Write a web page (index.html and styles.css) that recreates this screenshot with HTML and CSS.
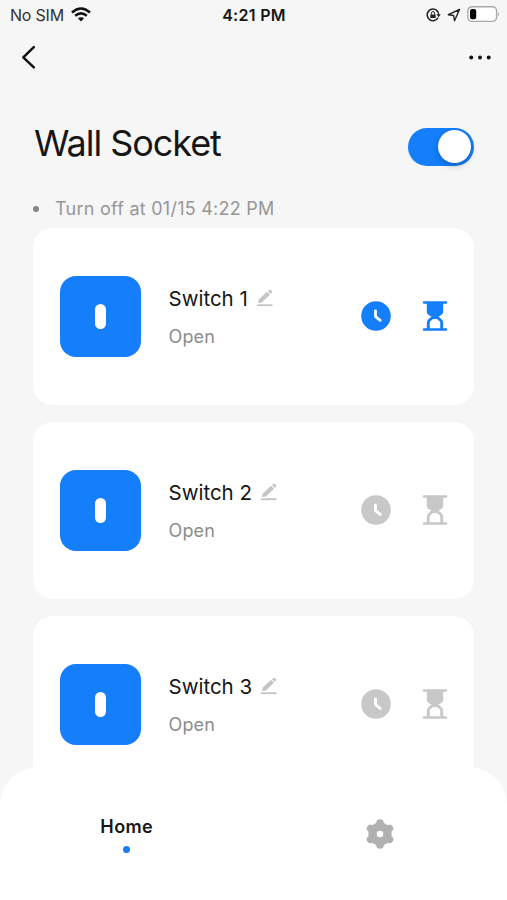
FILE: index.html
```html
<!DOCTYPE html>
<html lang="en">
<head>
<meta charset="utf-8">
<title>Wall Socket</title>
<link rel="stylesheet" href="styles.css">
</head>
<body>
<svg class="defs" width="0" height="0" aria-hidden="true">
  <symbol id="pencil" viewBox="0 0 18 18">
    <path d="M1 16.200h15.500" stroke="currentColor" stroke-width="1.800" fill="none"/>
    <path d="M2 14l.8-3.600 8.300-7.600 2.900 2.900-8.300 7.700z" fill="currentColor"/>
    <path d="M12 2.200l1.400-1.300q.8-.6 1.500.1l1.200 1.200q.6.700-.1 1.400L14.800 4.900z" fill="currentColor"/>
  </symbol>
  <symbol id="clock" viewBox="0 0 30 30">
    <circle cx="15" cy="15" r="14.800" fill="currentColor"/>
    <path d="M14.500 9.800v5.800l4.700 3.700" stroke="#fff" stroke-width="2.800" stroke-linecap="round" stroke-linejoin="round" fill="none"/>
  </symbol>
  <symbol id="hourglass" viewBox="0 0 26 30">
    <path d="M2 1.500h22M2 28.400h22" stroke="currentColor" stroke-width="2.500" stroke-linecap="round"/>
    <path d="M4.800 2h16.400v9q0 1.600-1.400 2.600L17.200 15.600H8.800L6.200 13.600Q4.800 12.600 4.800 11z" fill="currentColor"/>
    <path d="M6.300 28v-6.200q0-1.800 1.500-2.900l2.900-2.400h4.600l2.900 2.400q1.500 1.100 1.500 2.900V28" stroke="currentColor" stroke-width="2.900" fill="none"/>
  </symbol>
</svg>
<div class="screen">
  <header class="status">
    <div class="carrier"><span>No SIM</span>
      <svg width="20" height="15" viewBox="0 0 20 15" fill="none" stroke="#111" stroke-width="2.600"><path d="M1 5.400Q10-2.400 19 5.400M4.200 8.800q5.800-4.700 11.600 0"/><path d="M6.900 11.300q3.100-2.200 6.200 0L10 14.500z" fill="#111" stroke="none"/></svg>
    </div>
    <div class="time">4:21 PM</div>
    <div class="indicators">
      <svg width="15" height="14" viewBox="0 0 15 14" fill="none" stroke="#222"><path d="M11.500 3.200A5.800 5.800 0 1 0 12.100 9.600" stroke-width="1.500"/><path d="M10.900 2.500q1.600 1.700 1.800 4" stroke-width="1.300"/><path d="M10.500 6.200h4.300l-2.200 3z" fill="#222" stroke="none"/><path d="M4.300 6.500h5.400V10H4.300z" fill="#222" stroke="none"/><path d="M5.400 6.600V5.200a1.600 1.600 0 0 1 3.200 0v1.400"/></svg>
      <svg width="14" height="14" viewBox="0 0 14 14" fill="none" stroke="#222" stroke-width="1.400" stroke-linejoin="round"><path d="M12.500 1.500L1.300 6.700l5.300.8.900 5.200z"/></svg>
      <svg width="33" height="17" viewBox="0 0 33 17"><rect x=".8" y=".8" width="28.800" height="14.600" rx="4.300" fill="#fff" stroke="#aaa" stroke-width="1.400"/><rect x="3" y="2.900" width="6.200" height="10.400" rx="2" fill="#000"/><path d="M31 5.900q2 2 0 4.400z" fill="#aaa"/></svg>
    </div>
  </header>
  <nav class="topbar">
    <svg width="14" height="24" viewBox="0 0 14 24" fill="none" stroke="#111" stroke-width="2.500" stroke-linecap="round" stroke-linejoin="round"><path d="M12.800 2.200L2.300 12.300l10.500 10"/></svg>
    <svg width="22" height="5" viewBox="0 0 22 5" fill="#111"><circle cx="2.200" cy="2.500" r="2"/><circle cx="11" cy="2.500" r="2"/><circle cx="19.700" cy="2.500" r="2"/></svg>
  </nav>
  <section class="heading">
    <h1>Wall Socket</h1>
    <div class="toggle"><span class="knob"></span></div>
  </section>
  <p class="notice"><span class="bullet"></span><span class="notice-text">Turn off at 01/15 4:22 PM</span></p>
  <main class="cards">
    <article class="card">
      <div class="tile"><span class="bar"></span></div>
      <div class="info"><div class="name"><span>Switch 1</span><svg class="pencil"><use href="#pencil"/></svg></div><div class="state">Open</div></div>
      <div class="actions active"><svg class="clock"><use href="#clock"/></svg><svg class="hourglass"><use href="#hourglass"/></svg></div>
    </article>
    <article class="card">
      <div class="tile"><span class="bar"></span></div>
      <div class="info"><div class="name"><span>Switch 2</span><svg class="pencil"><use href="#pencil"/></svg></div><div class="state">Open</div></div>
      <div class="actions"><svg class="clock"><use href="#clock"/></svg><svg class="hourglass"><use href="#hourglass"/></svg></div>
    </article>
    <article class="card">
      <div class="tile"><span class="bar"></span></div>
      <div class="info"><div class="name"><span>Switch 3</span><svg class="pencil"><use href="#pencil"/></svg></div><div class="state">Open</div></div>
      <div class="actions"><svg class="clock"><use href="#clock"/></svg><svg class="hourglass"><use href="#hourglass"/></svg></div>
    </article>
  </main>
  <footer class="tabbar">
    <div class="tab"><span class="tab-label">Home</span><span class="tab-dot"></span></div>
    <div class="tab"><svg class="gear" width="28" height="30" viewBox="-14 -15 28 30"><g fill="#b1b1b1"><circle r="11.600"/><g id="teeth"><circle cy="-10.900" r="3.800"/><circle cy="10.900" r="3.800"/></g><use href="#teeth" transform="rotate(60)"/><use href="#teeth" transform="rotate(120)"/></g><circle r="3.300" fill="#fff"/></svg></div>
  </footer>
</div>
</body>
</html>
```
FILE: styles.css
```css
* { box-sizing: border-box; }
body { margin: 0; font-family: Inter, "Liberation Sans", sans-serif; color: #161616; }
.defs { display: block; }
svg { flex: none; display: block; }
.screen { position: relative; height: 900px; overflow: hidden; background: #f6f6f6; display: flex; flex-direction: column; }
.status { height: 29px; flex: none; display: grid; grid-template-columns: 1fr auto 1fr; align-items: center; padding: 0 7px 0 10px; }
.carrier { display: flex; align-items: center; gap: 7px; font-size: 16px; letter-spacing: -0.2px; color: #333; }
.time { font-size: 16px; font-weight: 600; letter-spacing: 0.3px; margin-left: -2px; }
.indicators { display: flex; align-items: center; justify-content: flex-end; gap: 6px; }
.topbar { height: 56px; flex: none; display: flex; align-items: center; justify-content: space-between; padding: 0 16.500px 0 21px; }
.heading { height: 104px; flex: none; display: flex; align-items: center; justify-content: space-between; padding: 17px 33px 0 34px; }
h1 { margin: -6px 0 0; font-size: 36px; line-height: 44px; font-weight: 400; letter-spacing: -1.050px; }
.toggle { width: 66px; height: 38px; border-radius: 19px; background: #147efb; padding: 2.500px 3px; display: flex; justify-content: flex-end; margin-top: 2px; }
.knob { width: 33px; height: 33px; border-radius: 50%; background: #fff; box-shadow: 0 3px 6px rgba(0,0,0,.22); }
.notice { margin: 0; height: 39px; flex: none; display: flex; align-items: center; padding-left: 33px; font-size: 18px; letter-spacing: 0.250px; color: #969696; }
.bullet { width: 6px; height: 6px; border-radius: 50%; background: #858585; margin-right: 16px; }
.cards { display: flex; flex-direction: column; gap: 17px; padding: 0 33px; }
.card { height: 177px; flex: none; display: flex; align-items: center; padding: 0 26px 0 27px; background: #fff; border-radius: 20px; }
.tile { width: 81px; height: 81px; border-radius: 16px; background: #147efb; display: flex; align-items: center; justify-content: center; }
.bar { width: 11px; height: 25px; border-radius: 6px; background: #fff; }
.info { margin-left: 27.500px; padding-top: 1px; flex: 1; }
.name { display: flex; align-items: center; gap: 8px; font-size: 20.500px; line-height: 26px; white-space: nowrap; }
.pencil { width: 18px; height: 18px; color: #c4c4c4; margin-top: -1px; }
.state { margin-top: 13px; font-size: 18px; line-height: 24px; letter-spacing: 0.150px; color: #8c8c8c; }
.actions { display: flex; align-items: center; gap: 31px; color: #c8c8c8; margin-top: -1px; }
.active { color: #147efb; }
.clock { width: 30px; height: 30px; }
.hourglass { width: 26px; height: 30px; }
.tabbar { position: absolute; left: 0; right: 0; bottom: 0; height: 133px; background: #fff; border-radius: 38px 38px 0 0; display: grid; grid-template-columns: 1fr 1fr; }
.tab { display: flex; flex-direction: column; align-items: center; }
.tab-label { margin-top: 48px; font-size: 18px; line-height: 24px; font-weight: 600; letter-spacing: 0.400px; }
.tab-dot { width: 7px; height: 7px; border-radius: 50%; background: #147efb; margin-top: 7px; }
.gear { margin-top: 52px; }
```
